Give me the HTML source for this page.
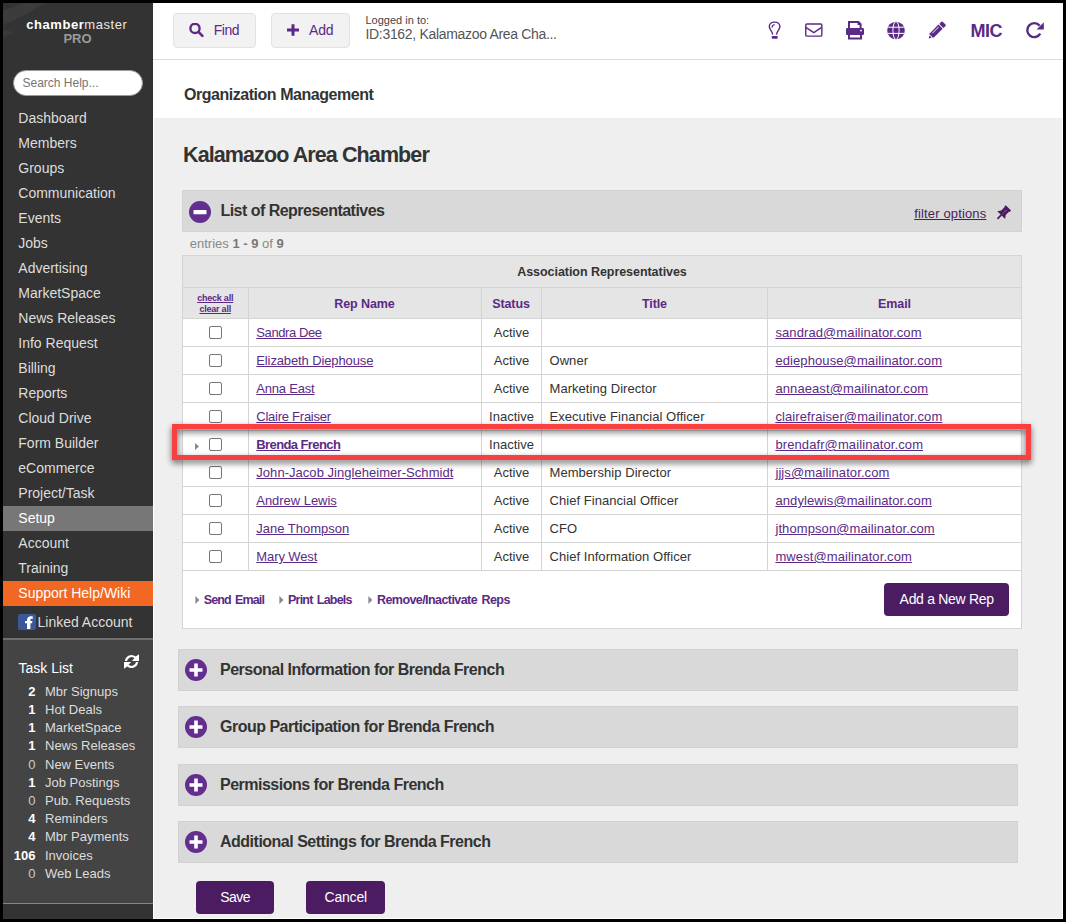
<!DOCTYPE html>
<html><head><meta charset="utf-8">
<style>
*{box-sizing:border-box;margin:0;padding:0}
html,body{width:1066px;height:922px;overflow:hidden;background:#000;font-family:"Liberation Sans",sans-serif}
body{position:relative}
div,svg{position:absolute;white-space:nowrap}
u{text-decoration:underline;text-underline-offset:1px}
</style></head><body>
<div style="left:3px;top:3px;width:1060px;height:916px;background:#fff"></div>
<div style="left:154px;top:118px;width:908px;height:800px;background:#efefef"></div>
<div style="left:3px;top:3px;width:150px;height:916px;background:#333"></div>
<div style="left:153px;top:918px;width:910px;height:1px;background:#fff"></div>
<div style="left:1062px;top:3px;width:1px;height:916px;background:#fff"></div>
<svg style="left:3px;top:3px" width="150" height="60" viewBox="0 0 150 60"><path d="M0 7.5 L12 3.5 L19 0 L42 0 L24 11 L0 22 Z" fill="#3c3c3c"/><path d="M0 27 L11 29 L0 34.5 Z" fill="#3b3b3b"/></svg>
<div style="left:26.3px;top:17.80px;font-size:13px;line-height:13px;color:#fff;letter-spacing:0.55px"><b>chamber</b><span style="color:#e8e8e8">master</span></div>
<div style="left:63.4px;top:31.70px;font-size:13px;line-height:13px;color:#9b9b9b;font-weight:700">PRO</div>
<div style="left:13px;top:70px;width:130px;height:26px;background:#fff;border-radius:13px;border:1px solid #999"></div>
<div style="left:22.5px;top:77.34px;font-size:12px;line-height:12px;color:#757575">Search Help...</div>
<div style="left:3px;top:506px;width:150px;height:25px;background:#777"></div>
<div style="left:3px;top:581px;width:150px;height:25px;background:#f26722"></div>
<div style="left:18.3px;top:111.45px;font-size:14px;line-height:14px;color:#ddd">Dashboard</div>
<div style="left:18.3px;top:136.45px;font-size:14px;line-height:14px;color:#ddd">Members</div>
<div style="left:18.3px;top:161.45px;font-size:14px;line-height:14px;color:#ddd">Groups</div>
<div style="left:18.3px;top:186.45px;font-size:14px;line-height:14px;color:#ddd">Communication</div>
<div style="left:18.3px;top:211.45px;font-size:14px;line-height:14px;color:#ddd">Events</div>
<div style="left:18.3px;top:236.45px;font-size:14px;line-height:14px;color:#ddd">Jobs</div>
<div style="left:18.3px;top:261.45px;font-size:14px;line-height:14px;color:#ddd">Advertising</div>
<div style="left:18.3px;top:286.45px;font-size:14px;line-height:14px;color:#ddd">MarketSpace</div>
<div style="left:18.3px;top:311.45px;font-size:14px;line-height:14px;color:#ddd">News Releases</div>
<div style="left:18.3px;top:336.45px;font-size:14px;line-height:14px;color:#ddd">Info Request</div>
<div style="left:18.3px;top:361.45px;font-size:14px;line-height:14px;color:#ddd">Billing</div>
<div style="left:18.3px;top:386.45px;font-size:14px;line-height:14px;color:#ddd">Reports</div>
<div style="left:18.3px;top:411.45px;font-size:14px;line-height:14px;color:#ddd">Cloud Drive</div>
<div style="left:18.3px;top:436.45px;font-size:14px;line-height:14px;color:#ddd">Form Builder</div>
<div style="left:18.3px;top:461.45px;font-size:14px;line-height:14px;color:#ddd">eCommerce</div>
<div style="left:18.3px;top:486.45px;font-size:14px;line-height:14px;color:#ddd">Project/Task</div>
<div style="left:18.3px;top:511.45px;font-size:14px;line-height:14px;color:#fff">Setup</div>
<div style="left:18.3px;top:536.45px;font-size:14px;line-height:14px;color:#ddd">Account</div>
<div style="left:18.3px;top:561.45px;font-size:14px;line-height:14px;color:#ddd">Training</div>
<div style="left:18.3px;top:586.45px;font-size:14px;line-height:14px;color:#fff">Support Help/Wiki</div>
<div style="left:18px;top:614px;width:18px;height:16px;background:#3b5998;border-radius:2px"></div>
<svg style="left:18px;top:614px" width="18" height="16" viewBox="0 0 18 16"><path d="M9 15 V9.2 H7 V7 H9 V6.2 C9 3.6 10.6 2.2 12.8 2.2 C13.6 2.2 14.4 2.3 14.8 2.4 V4.8 H13.6 C12.7 4.8 12.4 5.3 12.4 6 V7 H14.4 L14.1 9.2 H12.4 V15 Z" fill="#fff"/></svg>
<div style="left:37.5px;top:614.75px;font-size:14px;line-height:14px;color:#ddd">Linked Account</div>
<div style="left:3px;top:638px;width:150px;height:2px;background:#6e6e6e"></div>
<div style="left:3px;top:640px;width:150px;height:263px;background:#444"></div>
<div style="left:3px;top:903px;width:150px;height:1px;background:#858585"></div>
<div style="left:18.5px;top:661.05px;font-size:14px;line-height:14px;color:#fff">Task List</div>
<svg style="left:123.5px;top:654px" width="15" height="16" viewBox="0 0 15 16"><path id="sy" d="M0.9 7 A6.6 6.6 0 0 1 11.74 2.54 L15 0.3 V7 H7.9 L10.39 4.15 A4.5 4.5 0 0 0 3.04 7 Z" fill="#fff"/><use href="#sy" transform="rotate(180 7.5 7.5)"/></svg>
<div style="left:0;width:35.5px;text-align:right;top:684.80px;font-size:13px;line-height:13px;color:#fff;font-weight:700">2</div>
<div style="left:45px;top:684.80px;font-size:13px;line-height:13px;color:#ddd">Mbr Signups</div>
<div style="left:0;width:35.5px;text-align:right;top:703.00px;font-size:13px;line-height:13px;color:#fff;font-weight:700">1</div>
<div style="left:45px;top:703.00px;font-size:13px;line-height:13px;color:#ddd">Hot Deals</div>
<div style="left:0;width:35.5px;text-align:right;top:721.20px;font-size:13px;line-height:13px;color:#fff;font-weight:700">1</div>
<div style="left:45px;top:721.20px;font-size:13px;line-height:13px;color:#ddd">MarketSpace</div>
<div style="left:0;width:35.5px;text-align:right;top:739.40px;font-size:13px;line-height:13px;color:#fff;font-weight:700">1</div>
<div style="left:45px;top:739.40px;font-size:13px;line-height:13px;color:#ddd">News Releases</div>
<div style="left:0;width:35.5px;text-align:right;top:757.60px;font-size:13px;line-height:13px;color:#ccc">0</div>
<div style="left:45px;top:757.60px;font-size:13px;line-height:13px;color:#ddd">New Events</div>
<div style="left:0;width:35.5px;text-align:right;top:775.80px;font-size:13px;line-height:13px;color:#fff;font-weight:700">1</div>
<div style="left:45px;top:775.80px;font-size:13px;line-height:13px;color:#ddd">Job Postings</div>
<div style="left:0;width:35.5px;text-align:right;top:794.00px;font-size:13px;line-height:13px;color:#ccc">0</div>
<div style="left:45px;top:794.00px;font-size:13px;line-height:13px;color:#ddd">Pub. Requests</div>
<div style="left:0;width:35.5px;text-align:right;top:812.20px;font-size:13px;line-height:13px;color:#fff;font-weight:700">4</div>
<div style="left:45px;top:812.20px;font-size:13px;line-height:13px;color:#ddd">Reminders</div>
<div style="left:0;width:35.5px;text-align:right;top:830.40px;font-size:13px;line-height:13px;color:#fff;font-weight:700">4</div>
<div style="left:45px;top:830.40px;font-size:13px;line-height:13px;color:#ddd">Mbr Payments</div>
<div style="left:0;width:35.5px;text-align:right;top:848.60px;font-size:13px;line-height:13px;color:#fff;font-weight:700">106</div>
<div style="left:45px;top:848.60px;font-size:13px;line-height:13px;color:#ddd">Invoices</div>
<div style="left:0;width:35.5px;text-align:right;top:866.80px;font-size:13px;line-height:13px;color:#ccc">0</div>
<div style="left:45px;top:866.80px;font-size:13px;line-height:13px;color:#ddd">Web Leads</div>
<div style="left:153px;top:3px;width:1px;height:916px;background:#fff"></div>
<div style="left:153px;top:59px;width:910px;height:1px;background:#ddd"></div>
<div style="left:173px;top:13px;width:83px;height:35px;background:#f2f2f2;border:1px solid #e2e2e2;border-radius:4px"></div>
<div style="left:271px;top:13px;width:79px;height:35px;background:#f2f2f2;border:1px solid #e2e2e2;border-radius:4px"></div>
<svg style="left:189px;top:23px" width="15" height="15" viewBox="0 0 15 15"><circle cx="6" cy="5.4" r="4.6" fill="none" stroke="#5b2a86" stroke-width="2.3"/><path d="M9.4 8.8 L13.4 12.8" stroke="#5b2a86" stroke-width="2.6" stroke-linecap="round"/></svg>
<div style="left:213.8px;top:22.95px;font-size:14px;line-height:14px;color:#5b2a86;letter-spacing:-0.5px">Find</div>
<svg style="left:286px;top:23px" width="14" height="14" viewBox="0 0 14 14"><path d="M7 1.2 V12.8 M1 7 H13" stroke="#5b2a86" stroke-width="3"/></svg>
<div style="left:309px;top:22.95px;font-size:14px;line-height:14px;color:#5b2a86;letter-spacing:-0.2px">Add</div>
<div style="left:365.5px;top:14.89px;font-size:11px;line-height:11px;color:#444">Logged in to:</div>
<div style="left:365.5px;top:27.25px;font-size:14px;line-height:14px;color:#555;letter-spacing:-0.32px">ID:3162, Kalamazoo Area Cha...</div>
<svg style="left:766px;top:20px" width="18" height="20" viewBox="0 0 18 20">
<path d="M6.6 14.6 C6.4 12.5 5.6 11.2 4.6 9.8 C3.8 8.6 3.3 7.6 3.3 6.5 C3.3 3.9 5.6 2.1 8.6 2.1 C11.6 2.1 13.9 3.9 13.9 6.5 C13.9 7.6 13.4 8.6 12.6 9.8 C11.6 11.2 10.8 12.5 10.5 14.6" fill="none" stroke="#5b2a86" stroke-width="1.45"/>
<path d="M5.9 7.6 C6 6 7 4.9 8.6 4.6" fill="none" stroke="#5b2a86" stroke-width="1.1"/>
<rect x="5.7" y="15.9" width="5.95" height="2.9" rx="0.8" fill="#5b2a86"/></svg>
<svg style="left:804px;top:23px" width="20" height="15" viewBox="0 0 20 15">
<rect x="1.75" y="1" width="16.1" height="12.1" rx="1.2" fill="none" stroke="#5b2a86" stroke-width="1.4"/>
<path d="M1.8 4.4 L9.8 9.6 L17.6 4.4" fill="none" stroke="#5b2a86" stroke-width="1.4"/></svg>
<svg style="left:845px;top:20px" width="20" height="20" viewBox="0 0 20 20">
<path d="M4 8 V2 H13.5 L15.6 4.1 V8" fill="none" stroke="#5b2a86" stroke-width="2"/>
<path d="M12.5 1.5 V5 H16" fill="#5b2a86"/>
<rect x="1" y="8" width="18" height="6.9" rx="1.2" fill="#5b2a86"/>
<rect x="15.2" y="9.8" width="1.6" height="1.6" fill="#fff"/>
<path d="M4 12.5 V18.6 H16 V12.5" fill="none" stroke="#5b2a86" stroke-width="2"/></svg>
<svg style="left:886px;top:21px" width="20" height="19" viewBox="0 0 20 19">
<clipPath id="gc"><circle cx="10" cy="9.5" r="8.8"/></clipPath>
<circle cx="10" cy="9.5" r="8.8" fill="#5b2a86"/>
<g clip-path="url(#gc)" fill="none" stroke="#fff" stroke-width="1">
<ellipse cx="10" cy="9.5" rx="3.1" ry="9"/>
<path d="M0 6.2 H20 M0 12.4 H20"/>
</g></svg>
<svg style="left:927px;top:20px" width="22" height="22" viewBox="0 0 22 22">
<g transform="translate(1.75 18.5) rotate(-45)">
<path d="M0 0 L4.6 -2.95 H16.7 V2.95 H4.6 Z" fill="#5b2a86"/>
<rect x="17.7" y="-2.95" width="4" height="5.9" rx="0.9" fill="#5b2a86"/>
<path d="M6.2 -1.2 H15.2" stroke="#fff" stroke-width="0.9"/>
<path d="M2.6 -1.9 Q4.2 0 2.6 1.9" fill="none" stroke="#fff" stroke-width="0.9"/>
</g></svg>
<div style="left:970.6px;top:22.46px;font-size:18px;line-height:18px;color:#5b2a86;font-weight:700;letter-spacing:-0.5px">MIC</div>
<svg style="left:1025px;top:21px" width="20" height="19" viewBox="0 0 20 19">
<path d="M15.3 12.7 A7 7 0 1 1 14.6 4.6" fill="none" stroke="#5b2a86" stroke-width="2.4"/>
<path d="M18.8 1.2 V8.4 H11.6 Z" fill="#5b2a86"/></svg>
<div style="left:183.9px;top:87.16px;font-size:16px;line-height:16px;color:#333;font-weight:700;letter-spacing:-0.46px">Organization Management</div>
<div style="left:183px;top:145.10px;font-size:21.5px;line-height:21.5px;color:#333;font-weight:700;letter-spacing:-0.9px">Kalamazoo Area Chamber</div>
<div style="left:182px;top:190px;width:840px;height:42px;background:#d9d9d9;border:1px solid #d2d2d2"></div>
<svg style="left:189px;top:201px" width="22" height="22" viewBox="0 0 22 22"><circle cx="11" cy="11" r="11" fill="#632e8e"/><rect x="4.5" y="9" width="13" height="4.2" rx="0.5" fill="#fff"/></svg>
<div style="left:220.4px;top:203.46px;font-size:16px;line-height:16px;color:#333;font-weight:700;letter-spacing:-0.52px">List of Representatives</div>
<div style="left:914.2px;top:206.60px;font-size:13px;line-height:13px;color:#4a1d60;letter-spacing:0.15px"><u>filter options</u></div>
<svg style="left:992px;top:200px" width="24" height="24" viewBox="0 0 24 24">
<g transform="translate(16.4 7.9) rotate(45)" fill="#4a1d60"><path d="M-3.8 0 H3.8 V2 L3.2 2.4 V7 L5.6 10.2 H-5.6 L-3.2 7 V2.4 L-3.8 2 Z"/><rect x="-0.9" y="10" width="1.8" height="5.4"/></g>
<path d="M14.2 10.3 L11.2 13.3" stroke="#e0d8e8" stroke-width="0.7" stroke-dasharray="1 0.8"/></svg>
<div style="left:189.8px;top:236.50px;font-size:13px;line-height:13px;color:#888">entries <b style="color:#777">1 - 9</b> of <b style="color:#777">9</b></div>
<div style="left:182px;top:255px;width:840px;height:374px;background:#fff;border:1px solid #d4d4d4"></div>
<div style="left:183px;top:256px;width:838px;height:62px;background:#e5e5e5"></div>
<div style="left:182px;top:287px;width:840px;height:1px;background:#d4d4d4"></div>
<div style="left:182px;top:318px;width:840px;height:1px;background:#d4d4d4"></div>
<div style="left:182px;top:346px;width:840px;height:1px;background:#d4d4d4"></div>
<div style="left:182px;top:374px;width:840px;height:1px;background:#d4d4d4"></div>
<div style="left:182px;top:402px;width:840px;height:1px;background:#d4d4d4"></div>
<div style="left:182px;top:430px;width:840px;height:1px;background:#d4d4d4"></div>
<div style="left:182px;top:458px;width:840px;height:1px;background:#d4d4d4"></div>
<div style="left:182px;top:486px;width:840px;height:1px;background:#d4d4d4"></div>
<div style="left:182px;top:514px;width:840px;height:1px;background:#d4d4d4"></div>
<div style="left:182px;top:542px;width:840px;height:1px;background:#d4d4d4"></div>
<div style="left:182px;top:570px;width:840px;height:1px;background:#d4d4d4"></div>
<div style="left:248px;top:287px;width:1px;height:283px;background:#d4d4d4"></div>
<div style="left:481px;top:287px;width:1px;height:283px;background:#d4d4d4"></div>
<div style="left:541px;top:287px;width:1px;height:283px;background:#d4d4d4"></div>
<div style="left:767px;top:287px;width:1px;height:283px;background:#d4d4d4"></div>
<div style="left:402px;width:400px;text-align:center;top:265.62px;font-size:12.5px;line-height:12.5px;color:#333;font-weight:700;letter-spacing:-0.05px">Association Representatives</div>
<div style="left:15.199999999999989px;width:400px;text-align:center;top:293.58px;font-size:9px;line-height:9px;color:#5b2a86;font-weight:700;letter-spacing:-0.22px"><u>check all</u></div>
<div style="left:15.199999999999989px;width:400px;text-align:center;top:305.28px;font-size:9px;line-height:9px;color:#5b2a86;font-weight:700;letter-spacing:-0.22px"><u>clear all</u></div>
<div style="left:164.5px;width:400px;text-align:center;top:298.02px;font-size:12.5px;line-height:12.5px;color:#5b2a86;font-weight:700;letter-spacing:-0.1px">Rep Name</div>
<div style="left:311px;width:400px;text-align:center;top:298.02px;font-size:12.5px;line-height:12.5px;color:#5b2a86;font-weight:700;letter-spacing:-0.1px">Status</div>
<div style="left:454.5px;width:400px;text-align:center;top:298.02px;font-size:12.5px;line-height:12.5px;color:#5b2a86;font-weight:700;letter-spacing:-0.1px">Title</div>
<div style="left:694.5px;width:400px;text-align:center;top:298.02px;font-size:12.5px;line-height:12.5px;color:#5b2a86;font-weight:700;letter-spacing:-0.1px">Email</div>
<div style="left:209px;top:326px;width:13px;height:13px;border:1px solid #767676;border-radius:2px;background:#fff"></div>
<div style="left:256.3px;top:326.00px;font-size:13px;line-height:13px;color:#5b2a86;letter-spacing:-0.4px"><u>Sandra Dee</u></div>
<div style="left:311.5px;width:400px;text-align:center;top:326.00px;font-size:13px;line-height:13px;color:#333">Active</div>
<div style="left:775.4px;top:326.00px;font-size:13px;line-height:13px;color:#5b2a86;letter-spacing:0.1px"><u>sandrad@mailinator.com</u></div>
<div style="left:209px;top:354px;width:13px;height:13px;border:1px solid #767676;border-radius:2px;background:#fff"></div>
<div style="left:256.3px;top:354.00px;font-size:13px;line-height:13px;color:#5b2a86;letter-spacing:-0.12px"><u>Elizabeth Diephouse</u></div>
<div style="left:311.5px;width:400px;text-align:center;top:354.00px;font-size:13px;line-height:13px;color:#333">Active</div>
<div style="left:549.5px;top:354.00px;font-size:13px;line-height:13px;color:#333;letter-spacing:0.05px">Owner</div>
<div style="left:775.4px;top:354.00px;font-size:13px;line-height:13px;color:#5b2a86;letter-spacing:0.1px"><u>ediephouse@mailinator.com</u></div>
<div style="left:209px;top:382px;width:13px;height:13px;border:1px solid #767676;border-radius:2px;background:#fff"></div>
<div style="left:256.3px;top:382.00px;font-size:13px;line-height:13px;color:#5b2a86;letter-spacing:-0.2px"><u>Anna East</u></div>
<div style="left:311.5px;width:400px;text-align:center;top:382.00px;font-size:13px;line-height:13px;color:#333">Active</div>
<div style="left:549.5px;top:382.00px;font-size:13px;line-height:13px;color:#333;letter-spacing:0.05px">Marketing Director</div>
<div style="left:775.4px;top:382.00px;font-size:13px;line-height:13px;color:#5b2a86;letter-spacing:0.1px"><u>annaeast@mailinator.com</u></div>
<div style="left:209px;top:410px;width:13px;height:13px;border:1px solid #767676;border-radius:2px;background:#fff"></div>
<div style="left:256.3px;top:410.00px;font-size:13px;line-height:13px;color:#5b2a86;letter-spacing:-0.25px"><u>Claire Fraiser</u></div>
<div style="left:311.5px;width:400px;text-align:center;top:410.00px;font-size:13px;line-height:13px;color:#333">Inactive</div>
<div style="left:549.5px;top:410.00px;font-size:13px;line-height:13px;color:#333;letter-spacing:0.05px">Executive Financial Officer</div>
<div style="left:775.4px;top:410.00px;font-size:13px;line-height:13px;color:#5b2a86;letter-spacing:0.1px"><u>clairefraiser@mailinator.com</u></div>
<div style="left:209px;top:438px;width:13px;height:13px;border:1px solid #767676;border-radius:2px;background:#fff"></div>
<div style="left:256.3px;top:438.00px;font-size:13px;line-height:13px;color:#5b2a86;font-weight:700;letter-spacing:-0.6px"><u>Brenda French</u></div>
<svg style="left:194px;top:442px" width="6" height="9" viewBox="0 0 6 9"><path d="M1 1 L5 4.5 L1 8 Z" fill="#888"/></svg>
<div style="left:311.5px;width:400px;text-align:center;top:438.00px;font-size:13px;line-height:13px;color:#333">Inactive</div>
<div style="left:775.4px;top:438.00px;font-size:13px;line-height:13px;color:#5b2a86;letter-spacing:0.1px"><u>brendafr@mailinator.com</u></div>
<div style="left:209px;top:466px;width:13px;height:13px;border:1px solid #767676;border-radius:2px;background:#fff"></div>
<div style="left:256.3px;top:466.00px;font-size:13px;line-height:13px;color:#5b2a86;letter-spacing:0.04px"><u>John-Jacob Jingleheimer-Schmidt</u></div>
<div style="left:311.5px;width:400px;text-align:center;top:466.00px;font-size:13px;line-height:13px;color:#333">Active</div>
<div style="left:549.5px;top:466.00px;font-size:13px;line-height:13px;color:#333;letter-spacing:0.05px">Membership Director</div>
<div style="left:775.4px;top:466.00px;font-size:13px;line-height:13px;color:#5b2a86;letter-spacing:0.1px"><u>jjjs@mailinator.com</u></div>
<div style="left:209px;top:494px;width:13px;height:13px;border:1px solid #767676;border-radius:2px;background:#fff"></div>
<div style="left:256.3px;top:494.00px;font-size:13px;line-height:13px;color:#5b2a86;letter-spacing:-0.04px"><u>Andrew Lewis</u></div>
<div style="left:311.5px;width:400px;text-align:center;top:494.00px;font-size:13px;line-height:13px;color:#333">Active</div>
<div style="left:549.5px;top:494.00px;font-size:13px;line-height:13px;color:#333;letter-spacing:0.05px">Chief Financial Officer</div>
<div style="left:775.4px;top:494.00px;font-size:13px;line-height:13px;color:#5b2a86;letter-spacing:0.1px"><u>andylewis@mailinator.com</u></div>
<div style="left:209px;top:522px;width:13px;height:13px;border:1px solid #767676;border-radius:2px;background:#fff"></div>
<div style="left:256.3px;top:522.00px;font-size:13px;line-height:13px;color:#5b2a86"><u>Jane Thompson</u></div>
<div style="left:311.5px;width:400px;text-align:center;top:522.00px;font-size:13px;line-height:13px;color:#333">Active</div>
<div style="left:549.5px;top:522.00px;font-size:13px;line-height:13px;color:#333;letter-spacing:0.05px">CFO</div>
<div style="left:775.4px;top:522.00px;font-size:13px;line-height:13px;color:#5b2a86;letter-spacing:0.1px"><u>jthompson@mailinator.com</u></div>
<div style="left:209px;top:550px;width:13px;height:13px;border:1px solid #767676;border-radius:2px;background:#fff"></div>
<div style="left:256.3px;top:550.00px;font-size:13px;line-height:13px;color:#5b2a86;letter-spacing:-0.1px"><u>Mary West</u></div>
<div style="left:311.5px;width:400px;text-align:center;top:550.00px;font-size:13px;line-height:13px;color:#333">Active</div>
<div style="left:549.5px;top:550.00px;font-size:13px;line-height:13px;color:#333;letter-spacing:0.05px">Chief Information Officer</div>
<div style="left:775.4px;top:550.00px;font-size:13px;line-height:13px;color:#5b2a86;letter-spacing:0.1px"><u>mwest@mailinator.com</u></div>
<svg style="left:194.7px;top:595px" width="5" height="10" viewBox="0 0 5 10"><path d="M0.4 1 L4.4 5 L0.4 9 Z" fill="#888"/></svg>
<div style="left:203.7px;top:594.22px;font-size:12.5px;line-height:12.5px;color:#5b2a86;font-weight:700;letter-spacing:-0.85px;word-spacing:1.5px">Send Email</div>
<svg style="left:279px;top:595px" width="5" height="10" viewBox="0 0 5 10"><path d="M0.4 1 L4.4 5 L0.4 9 Z" fill="#888"/></svg>
<div style="left:288px;top:594.22px;font-size:12.5px;line-height:12.5px;color:#5b2a86;font-weight:700;letter-spacing:-0.775px;word-spacing:1.5px">Print Labels</div>
<svg style="left:368px;top:595px" width="5" height="10" viewBox="0 0 5 10"><path d="M0.4 1 L4.4 5 L0.4 9 Z" fill="#888"/></svg>
<div style="left:377px;top:594.22px;font-size:12.5px;line-height:12.5px;color:#5b2a86;font-weight:700;letter-spacing:-0.57px;word-spacing:1.5px">Remove/Inactivate Reps</div>
<div style="left:884px;top:583px;width:125px;height:33px;background:#4b1c62;border-radius:4px"></div>
<div style="left:899.6px;top:591.95px;font-size:14px;line-height:14px;color:#fff;letter-spacing:-0.3px">Add a New Rep</div>
<div style="left:172px;top:424px;width:859px;height:36px;border:5px solid #f7403f;filter:drop-shadow(0 3px 3px rgba(0,0,0,0.6))"></div>
<div style="left:178px;top:649px;width:840px;height:42px;background:#d9d9d9;border:1px solid #d2d2d2"></div>
<svg style="left:185px;top:659px" width="22" height="22" viewBox="0 0 22 22"><circle cx="11" cy="11" r="11" fill="#632e8e"/><path d="M11 4.5 V17.5 M4.5 11 H17.5" stroke="#fff" stroke-width="3.6"/></svg>
<div style="left:220.0px;top:662.46px;font-size:16px;line-height:16px;color:#333;font-weight:700;letter-spacing:-0.5px">Personal Information for Brenda French</div>
<div style="left:178px;top:706px;width:840px;height:42px;background:#d9d9d9;border:1px solid #d2d2d2"></div>
<svg style="left:185px;top:716px" width="22" height="22" viewBox="0 0 22 22"><circle cx="11" cy="11" r="11" fill="#632e8e"/><path d="M11 4.5 V17.5 M4.5 11 H17.5" stroke="#fff" stroke-width="3.6"/></svg>
<div style="left:220.0px;top:719.46px;font-size:16px;line-height:16px;color:#333;font-weight:700;letter-spacing:-0.5px">Group Participation for Brenda French</div>
<div style="left:178px;top:764px;width:840px;height:42px;background:#d9d9d9;border:1px solid #d2d2d2"></div>
<svg style="left:185px;top:774px" width="22" height="22" viewBox="0 0 22 22"><circle cx="11" cy="11" r="11" fill="#632e8e"/><path d="M11 4.5 V17.5 M4.5 11 H17.5" stroke="#fff" stroke-width="3.6"/></svg>
<div style="left:220.0px;top:777.46px;font-size:16px;line-height:16px;color:#333;font-weight:700;letter-spacing:-0.5px">Permissions for Brenda French</div>
<div style="left:178px;top:821px;width:840px;height:42px;background:#d9d9d9;border:1px solid #d2d2d2"></div>
<svg style="left:185px;top:831px" width="22" height="22" viewBox="0 0 22 22"><circle cx="11" cy="11" r="11" fill="#632e8e"/><path d="M11 4.5 V17.5 M4.5 11 H17.5" stroke="#fff" stroke-width="3.6"/></svg>
<div style="left:220.0px;top:834.46px;font-size:16px;line-height:16px;color:#333;font-weight:700;letter-spacing:-0.5px">Additional Settings for Brenda French</div>
<div style="left:196px;top:881px;width:78px;height:33px;background:#4b1c62;border-radius:4px"></div>
<div style="left:306px;top:881px;width:79px;height:33px;background:#4b1c62;border-radius:4px"></div>
<div style="left:220.2px;top:890.05px;font-size:14px;line-height:14px;color:#fff;letter-spacing:-0.5px">Save</div>
<div style="left:324.5px;top:890.05px;font-size:14px;line-height:14px;color:#fff;letter-spacing:-0.2px">Cancel</div>
</body></html>
